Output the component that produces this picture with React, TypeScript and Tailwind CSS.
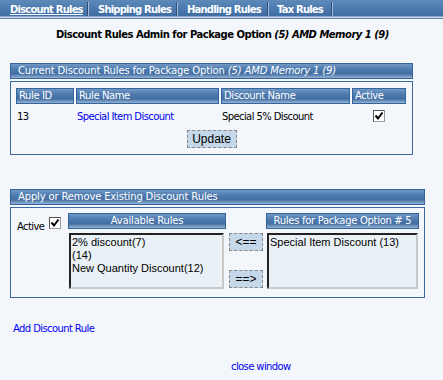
import React from "react";

const headBar =
  "bg-[linear-gradient(to_bottom,#7398c4_0%,#4f7cb0_35%,#436fa3_70%,#98b3d4_100%)] border border-[#33659c] text-white whitespace-nowrap overflow-hidden";

function Check() {
  return (
    <span className="inline-block w-[12px] h-[12px] bg-white border border-[#999] border-t-[#555] border-l-[#555] relative">
      <svg width="10" height="10" viewBox="0 0 10 10" className="absolute left-0 top-0">
        <path d="M1.5 4.5 L4 7.5 L8.5 1.5" stroke="#000" strokeWidth="2" fill="none" />
      </svg>
    </span>
  );
}

function Sep() {
  return <span className="w-[2px] h-[14px] border-l border-[#2c4f7a] border-r border-r-[#a7bcd6]" />;
}

export default function App() {
  const font = { fontFamily: '"DejaVu Sans", Verdana, sans-serif' };
  const lib = { fontFamily: '"Liberation Sans", Arial, sans-serif' };
  return (
    <div className="w-[443px] h-[380px] bg-[#f3f7fb] relative overflow-hidden text-[10px] text-black" style={font}>
      {/* tab bar */}
      <div className="h-[19px] bg-[linear-gradient(to_bottom,#5e8aba_0%,#4b79ad_50%,#406ea2_84%,#c8d6e6_89%,#c8d6e6_92%,#2f5b8e_100%)] flex items-start pt-[2px]">
        <div className="flex items-center h-[14px] font-bold text-white text-[10px] tracking-[-0.8px] whitespace-nowrap">
          <span className="ml-[10px] underline w-[77px]">Discount Rules</span>
          <Sep />
          <span className="ml-[9px] w-[78px]">Shipping Rules</span>
          <Sep />
          <span className="ml-[9px] w-[80px]">Handling Rules</span>
          <Sep />
          <span className="ml-[8px] w-[54px]">Tax Rules</span>
          <Sep />
        </div>
      </div>

      {/* title */}
      <div className="mt-[10px] ml-[56px] font-bold text-[10px] leading-[12px] tracking-[-0.5px] whitespace-nowrap">
        Discount Rules Admin for Package Option <i>(5) AMD Memory 1 (9)</i>
      </div>

      {/* section 1 */}
      <div className="mt-[22px] ml-[10px] w-[403px]">
        <div className={`${headBar} h-[16px] pl-[7px] leading-[14px] tracking-[-0.15px]`}>
          Current Discount Rules for Package Option <i>(5) AMD Memory 1 (9)</i>
        </div>
        <div className="mt-[2px] border border-[#3a6a9e] h-[74px] px-[5px] pt-[6px]">
          <div className="flex gap-[2px] h-[16px] tracking-[-0.4px]">
            <div className={`${headBar} w-[58px] pl-[2px] leading-[14px]`}>Rule ID</div>
            <div className={`${headBar} w-[143px] pl-[2px] leading-[14px]`}>Rule Name</div>
            <div className={`${headBar} w-[129px] pl-[2px] leading-[14px]`}>Discount Name</div>
            <div className={`${headBar} w-[54px] pl-[2px] leading-[14px]`}>Active</div>
          </div>
          <div className="flex gap-[2px] h-[22px] items-center mt-[1px] tracking-[-0.6px] whitespace-nowrap">
            <div className="w-[58px] pl-[1px]">13</div>
            <div className="w-[143px] pl-[1px] text-[#0000ee]">Special Item Discount</div>
            <div className="w-[129px] pl-[1px]">Special 5% Discount</div>
            <div className="w-[54px] flex justify-center"><Check /></div>
          </div>
          <div className="flex justify-center mt-[3px]">
            <button className="w-[50px] h-[18px] bg-[#c5d8ea] border border-dashed border-[#888] text-[12px] leading-[14px]" style={lib}>Update</button>
          </div>
        </div>
      </div>

      {/* section 2 */}
      <div className="mt-[34px] ml-[10px] w-[415px]">
        <div className={`${headBar} h-[16px] pl-[7px] leading-[14px] tracking-[-0.15px]`}>Apply or Remove Existing Discount Rules</div>
        <div className="mt-[2px] border border-[#3a6a9e] h-[91px] flex pl-[6px] pt-[5px]">
          <div className="w-[44px] flex items-start justify-between pt-[4px] tracking-[-0.6px]">
            <span className="mt-[2px]">Active</span>
            <Check />
          </div>
          <div className="ml-[7px] w-[158px]">
            <div className={`${headBar} h-[16px] text-center leading-[14px] tracking-[-0.2px]`}>Available Rules</div>
            <div className="mt-[4px] ml-[1px] w-[155px] h-[56px] bg-[#eaf1f6] border-2 border-[#c8c8c8] border-t-[#222] border-l-[#222] text-[11px] leading-[13px] pl-[1px] pt-[1px] whitespace-nowrap overflow-hidden" style={lib}>
              <div>2% discount(7)</div>
              <div>(14)</div>
              <div>New Quantity Discount(12)</div>
            </div>
          </div>
          <div className="ml-[3px] w-[34px] pt-[20px] flex flex-col gap-[19px]">
            <button className="w-[34px] h-[18px] bg-[#c5d8ea] border border-dashed border-[#888] text-[12px] leading-[14px]" style={lib}>&lt;==</button>
            <button className="w-[34px] h-[18px] bg-[#c5d8ea] border border-dashed border-[#888] text-[12px] leading-[14px]" style={lib}>==&gt;</button>
          </div>
          <div className="ml-[3px] w-[153px]">
            <div className={`${headBar} h-[16px] text-center leading-[14px] tracking-[-0.3px]`}>Rules for Package Option # 5</div>
            <div className="mt-[4px] ml-[1px] w-[151px] h-[56px] bg-[#eaf1f6] border-2 border-[#c8c8c8] border-t-[#222] border-l-[#222] text-[11px] leading-[13px] pl-[1px] pt-[1px] whitespace-nowrap overflow-hidden" style={lib}>
              <div>Special Item Discount (13)</div>
            </div>
          </div>
        </div>
      </div>

      <div className="mt-[23px] ml-[13px] text-[#0000ee] tracking-[-0.6px]">Add Discount Rule</div>
      <div className="mt-[23px] ml-[231px] text-[#0000ee] tracking-[-0.6px]">close window</div>
    </div>
  );
}
